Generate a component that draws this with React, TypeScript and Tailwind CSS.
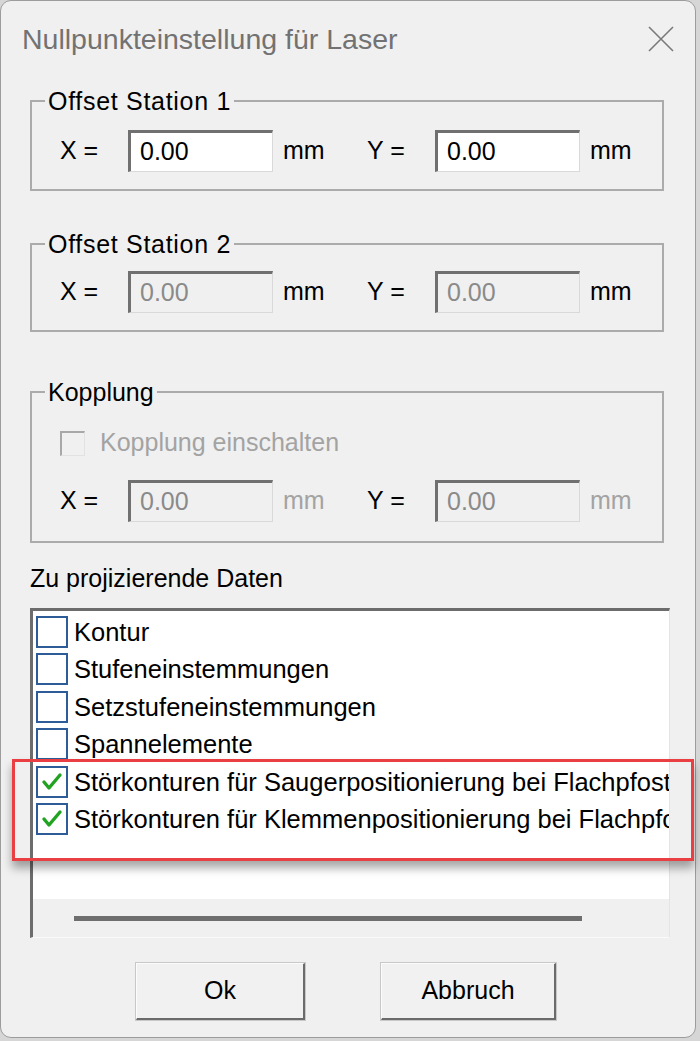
import { ReactNode } from 'react';

const inputBase =
  'w-[145px] h-[42px] flex items-center pl-[9px] border-t-[3px] border-l-[3px] border-r border-b border-t-[#707070] border-l-[#707070] border-r-[#d9d9d9] border-b-[#d9d9d9]';

const Field = ({ disabled }: { disabled?: boolean }) => (
  <div className={disabled ? `${inputBase} bg-[#f0f0f0] text-[#8a8a8a]` : `${inputBase} bg-white text-black`}>
    0.00
  </div>
);

const XYRow = ({ disabled, grayUnit }: { disabled?: boolean; grayUnit?: boolean }) => {
  const unit = grayUnit ? 'text-[#a3a3a3]' : 'text-black';
  return (
    <div className="flex items-center h-[42px] pl-[28px]">
      <span className="w-[68px]">X =</span>
      <Field disabled={disabled} />
      <span className={`w-[94px] pl-[10px] ${unit}`}>mm</span>
      <span className="w-[68px]">Y =</span>
      <Field disabled={disabled} />
      <span className={`pl-[10px] ${unit}`}>mm</span>
    </div>
  );
};

const Group = ({
  title,
  children,
  className,
  legendClass,
}: {
  title: string;
  children: ReactNode;
  className?: string;
  legendClass?: string;
}) => (
  <fieldset className={`w-[634px] border-2 border-[#ababab] ${className ?? ''}`}>
    <legend className={`ml-[13px] px-[3px] leading-[30px] ${legendClass ?? ''}`}>{title}</legend>
    {children}
  </fieldset>
);

const items = [
  { label: 'Kontur', checked: false },
  { label: 'Stufeneinstemmungen', checked: false },
  { label: 'Setzstufeneinstemmungen', checked: false },
  { label: 'Spannelemente', checked: false },
  { label: 'Störkonturen für Saugerpositionierung bei Flachpfosten', checked: true },
  { label: 'Störkonturen für Klemmenpositionierung bei Flachpfosten', checked: true },
];

const ListItem = ({ label, checked }: { label: string; checked: boolean }) => (
  <div className="flex items-center h-[37.5px] pl-[3px] whitespace-nowrap">
    <div className="w-[32px] h-[32px] shrink-0 border-2 border-[#2d5c98] bg-white flex items-center justify-center">
      {checked && (
        <svg width="24" height="24" viewBox="0 0 24 24">
          <polyline points="4,12 9,18 20,5" fill="none" stroke="#21a321" strokeWidth="3.4" strokeLinecap="round" strokeLinejoin="round" />
        </svg>
      )}
    </div>
    <span className="ml-[6px] text-[25.5px]">{label}</span>
  </div>
);

const Button = ({ label, w }: { label: string; w: string }) => (
  <button
    className={`${w} h-[57px] bg-[#f1f1f1] border-t border-l border-t-[#fcfcfc] border-l-[#fcfcfc] border-r-2 border-b-2 border-r-[#6b6b6b] border-b-[#6b6b6b] outline outline-1 outline-[#c8c8c8] text-[25px] text-black`}
  >
    {label}
  </button>
);

export default function App() {
  return (
    <div className="relative w-[700px] h-[1041px] bg-[#d6d6d6] font-['Liberation_Sans',Arial,sans-serif] text-[25px] text-black">
      <div className="w-[696px] h-[1038px] rounded-[11px] border border-[#9c9c9c] bg-[#f0f0f0] overflow-hidden flex flex-col">
        {/* title bar */}
        <div className="h-[85px] shrink-0 flex items-start justify-between pl-[21px] pr-[20px] pt-[21px]">
          <span className="text-[28.5px] leading-[34px] text-[#727272]">Nullpunkteinstellung für Laser</span>
          <svg width="28" height="28" viewBox="0 0 28 28" className="mt-[3px]">
            <path d="M2 2 L26 26 M26 2 L2 26" stroke="#7a7a7a" strokeWidth="1.6" />
          </svg>
        </div>

        <div className="flex flex-col pl-[29px]">
          <Group title="Offset Station 1" legendClass="tracking-[0.7px]">
            <div className="pt-[14px] pb-[17px]">
              <XYRow />
            </div>
          </Group>

          <Group title="Offset Station 2" legendClass="tracking-[0.7px]" className="mt-[38px]">
            <div className="pt-[12px] pb-[17px]">
              <XYRow disabled />
            </div>
          </Group>

          <Group title="Kopplung" className="mt-[45px]">
            <div className="pt-[21px] pb-[19px]">
              <div className="flex items-center h-[30px] pl-[28px]">
                <div className="w-[25px] h-[25px] border-t-2 border-l-2 border-t-[#a8a8a8] border-l-[#a8a8a8] border-r border-b border-r-[#e2e2e2] border-b-[#e2e2e2] bg-[#f0f0f0]" />
                <span className="ml-[15px] text-[#a3a3a3]">Kopplung einschalten</span>
              </div>
              <div className="mt-[22px]">
                <XYRow disabled grayUnit />
              </div>
            </div>
          </Group>

          <div className="mt-[20px] leading-[30px]">Zu projizierende Daten</div>

          <div className="mt-[15px] w-[640px] h-[330px] flex flex-col border-t-[3px] border-l-[3px] border-t-[#6c6c6c] border-l-[#6c6c6c] border-r border-b border-r-[#e4e4e4] border-b-[#fafafa]">
            <div className="flex-1 bg-white pt-[2px] overflow-hidden">
              {items.map((it) => (
                <ListItem key={it.label} label={it.label} checked={it.checked} />
              ))}
            </div>
            <div className="h-[38px] shrink-0 bg-[#f0f0f0] flex items-center">
              <div className="ml-[41px] w-[508px] h-[5px] bg-[#6e6e6e]" />
            </div>
          </div>
        </div>

        <div className="mt-[25px] flex justify-center gap-[76px] pr-[4px]">
          <Button label="Ok" w="w-[169px]" />
          <Button label="Abbruch" w="w-[175px]" />
        </div>
      </div>

      {/* red annotation frame */}
      <div className="absolute left-[12px] right-[6px] top-[759px] bottom-[180px] border-[3px] border-[#ea3f42] shadow-[0_7px_9px_rgba(0,0,0,0.35)]" />
    </div>
  );
}
